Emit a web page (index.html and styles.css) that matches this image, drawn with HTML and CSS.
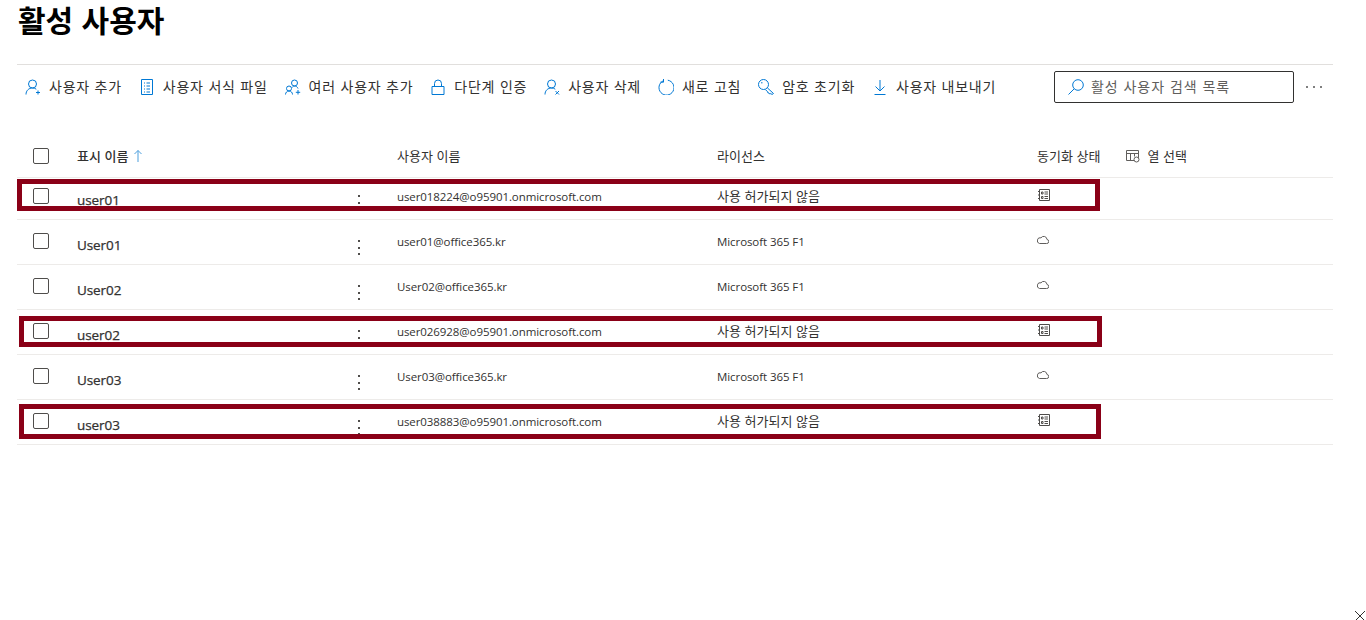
FILE: index.html
```html
<!DOCTYPE html>
<html lang="ko">
<head>
  <meta charset="UTF-8">
  <title>활성 사용자</title>
  <link rel="stylesheet" href="styles.css">
</head>
<body>
  <div class="page">
    <h1 class="title">활성 사용자</h1>

    <!-- 명령 모음 -->
    <div class="toolbar">
      <button class="tool">
        <svg class="ico" viewBox="0 0 16 16"><circle cx="7.500" cy="5" r="4"/><path d="M1 15.500c0-3.800 2.700-6.500 6.500-6.500 1.500 0 2.800.4 3.800 1.200M13 11.500v4M11 13.500h4"/></svg>
        사용자 추가
      </button>
      <button class="tool">
        <svg class="ico" viewBox="0 0 16 16"><path d="M2.500.5h11v15h-11zM5 4h1M7.500 4H11M5 7h1M7.500 7H11M5 10h1M7.500 10H11M5 13h1M7.500 13H11"/></svg>
        사용자 서식 파일
      </button>
      <button class="tool">
        <svg class="ico" viewBox="0 0 16 16"><circle cx="9.500" cy="4" r="3"/><circle cx="4" cy="9.500" r="2.500"/><path d="M.5 15.500c0-2 1.500-3.500 3.500-3.500s3.500 1.500 3.500 3.500M7 8.500c.7-.8 1.500-1.500 2.500-1.500 1.700 0 3 1 3.500 2.500M13 11v4.500M10.800 13.300h4.400"/></svg>
        여러 사용자 추가
      </button>
      <button class="tool">
        <svg class="ico" viewBox="0 0 16 16"><path d="M2 7.500h12v8H2zM4.500 7.500V4.500a3.500 3.500 0 0 1 7 0v3"/></svg>
        다단계 인증
      </button>
      <button class="tool">
        <svg class="ico" viewBox="0 0 16 16"><circle cx="7.500" cy="5" r="4"/><path d="M1 15.500c0-3.800 2.700-6.500 6.500-6.500 1.500 0 2.800.4 3.800 1.200M11.500 12l3.500 3.500M15 12l-3.500 3.500"/></svg>
        사용자 삭제
      </button>
      <button class="tool">
        <svg class="ico" viewBox="0 0 16 16"><path d="M5.500 1.200A7.500 7.500 0 1 0 9.800.7M5.500 -.5v3.200H2.300" transform="translate(0 .5)"/></svg>
        새로 고침
      </button>
      <button class="tool">
        <svg class="ico" viewBox="0 0 16 16"><circle cx="5.500" cy="5.500" r="5"/><path d="M3 3.800h1.500M9.300 8.800l6.200 5.700-1.500 1-1.200-1-1 .6-1-1.200-.8.2-.3-1.400-2.300-2"/></svg>
        암호 초기화
      </button>
      <button class="tool">
        <svg class="ico" viewBox="0 0 16 16"><path d="M8 1v11M3.500 7.500L8 12l4.500-4.500M2.500 15.500h11"/></svg>
        사용자 내보내기
      </button>

      <div class="search">
        <svg class="ico" viewBox="0 0 16 16"><circle cx="10" cy="6" r="5.300"/><path d="M6.200 9.800L.5 15.500"/></svg>
        <span>활성 사용자 검색 목록</span>
      </div>
      <div class="more"><i></i><i></i><i></i></div>
    </div>

    <!-- 사용자 목록 -->
    <div class="list">
      <div class="row head">
        <span class="check"></span>
        <div class="name-col">표시 이름 <svg class="sort" viewBox="0 0 8 12"><path d="M4 .5V12M.5 4L4 .5 7.500 4"/></svg></div>
        <div>사용자 이름</div>
        <div>라이선스</div>
        <div class="sync-col">
          <span>동기화 상태</span>
          <span class="pick">
            <svg class="ico-sm" viewBox="0 0 14 14"><path d="M.5 1.500h12v10H.5zM.5 4.500h12M4.500 4.500v7M8.500 4.500v3"/><circle cx="10.500" cy="10.500" r="2.500" class="gear"/></svg>
            열 선택
          </span>
        </div>
      </div>

      <div class="row first">
        <span class="check"></span>
        <div class="name-col"><strong>user01</strong><span class="dots"><i></i><i></i><i></i></span></div>
        <div>user018224@o95901.onmicrosoft.com</div>
        <div class="ko">사용 허가되지 않음</div>
        <div><svg class="book" viewBox="0 0 12 12"><path d="M1.500.5h10v11h-10zM0 2.500h2M0 6h2M0 9.500h2M3.500 3h1.500v2H3.500zM3.500 7.500h1.500v2H3.500zM6.500 3h3.500M6.500 5h3.500M6.500 7.500h3.500M6.500 9.500h3.500"/></svg></div>
        <div class="mark mark-a"></div>
      </div>

      <div class="row">
        <span class="check"></span>
        <div class="name-col"><strong>User01</strong><span class="dots"><i></i><i></i><i></i></span></div>
        <div>user01@office365.kr</div>
        <div>Microsoft 365 F1</div>
        <div><svg class="cloud" viewBox="0 0 12 9"><path d="M2.500 8.500h7a2 2 0 0 0 .5-4A3.300 3.300 0 0 0 4 2.800 2.900 2.900 0 0 0 2.500 8.500z"/></svg></div>
      </div>

      <div class="row">
        <span class="check"></span>
        <div class="name-col"><strong>User02</strong><span class="dots"><i></i><i></i><i></i></span></div>
        <div>User02@office365.kr</div>
        <div>Microsoft 365 F1</div>
        <div><svg class="cloud" viewBox="0 0 12 9"><path d="M2.500 8.500h7a2 2 0 0 0 .5-4A3.300 3.300 0 0 0 4 2.800 2.900 2.900 0 0 0 2.500 8.500z"/></svg></div>
      </div>

      <div class="row">
        <span class="check"></span>
        <div class="name-col"><strong>user02</strong><span class="dots"><i></i><i></i><i></i></span></div>
        <div>user026928@o95901.onmicrosoft.com</div>
        <div class="ko">사용 허가되지 않음</div>
        <div><svg class="book" viewBox="0 0 12 12"><path d="M1.500.5h10v11h-10zM0 2.500h2M0 6h2M0 9.500h2M3.500 3h1.500v2H3.500zM3.500 7.500h1.500v2H3.500zM6.500 3h3.500M6.500 5h3.500M6.500 7.500h3.500M6.500 9.500h3.500"/></svg></div>
        <div class="mark mark-b"></div>
      </div>

      <div class="row">
        <span class="check"></span>
        <div class="name-col"><strong>User03</strong><span class="dots"><i></i><i></i><i></i></span></div>
        <div>User03@office365.kr</div>
        <div>Microsoft 365 F1</div>
        <div><svg class="cloud" viewBox="0 0 12 9"><path d="M2.500 8.500h7a2 2 0 0 0 .5-4A3.300 3.300 0 0 0 4 2.800 2.900 2.900 0 0 0 2.500 8.500z"/></svg></div>
      </div>

      <div class="row">
        <span class="check"></span>
        <div class="name-col"><strong>user03</strong><span class="dots"><i></i><i></i><i></i></span></div>
        <div>user038883@o95901.onmicrosoft.com</div>
        <div class="ko">사용 허가되지 않음</div>
        <div><svg class="book" viewBox="0 0 12 12"><path d="M1.500.5h10v11h-10zM0 2.500h2M0 6h2M0 9.500h2M3.500 3h1.500v2H3.500zM3.500 7.500h1.500v2H3.500zM6.500 3h3.500M6.500 5h3.500M6.500 7.500h3.500M6.500 9.500h3.500"/></svg></div>
        <div class="mark mark-c"></div>
      </div>
    </div>
  </div>

  <svg class="close" viewBox="0 0 12 12"><path d="M1 1l10 10M11 1L1 11"/></svg>
</body>
</html>
```
FILE: styles.css
```css
html, body {
  height: 100%;
}

body {
  margin: 0;
  background: #fff;
  color: #323130;
  font-family: "Open Sans", "Noto Sans CJK KR", sans-serif;
  font-size: 11.500px;
  letter-spacing: -0.08px;
  overflow: hidden;
}

.page {
  width: 1316px;
  margin-left: 17px;
}

.title {
  height: 40px;
  margin: 0 0 24px 1px;
  color: #000;
  font-family: "Liberation Sans", "Noto Sans CJK KR", sans-serif;
  font-size: 30px;
  font-weight: 700;
  letter-spacing: 0;
  line-height: 43px;
}

/* Toolbar */
.toolbar {
  display: flex;
  align-items: center;
  gap: 17px;
  height: 32px;
  margin-bottom: 32px;
  padding: 6px 11px 0 8px;
  border-top: 1px solid #e1dfdd;
}

.tool {
  display: flex;
  align-items: center;
  gap: 8px;
  height: 32px;
  padding: 0 0 2px;
  border: none;
  background: none;
  color: #323130;
  font-family: "Noto Sans CJK KR", sans-serif;
  font-size: 14px;
  letter-spacing: 0.75px;
  white-space: nowrap;
}

.tool .ico {
  margin-top: 2px;
}

.ico {
  flex: none;
  width: 16px;
  height: 16px;
  fill: none;
  stroke: #0078d4;
  stroke-width: 1;
}

.search {
  display: flex;
  align-items: center;
  gap: 7px;
  box-sizing: border-box;
  flex: none;
  width: 240px;
  height: 32px;
  margin-left: auto;
  margin-right: -5px;
  padding-left: 13px;
  border: 1px solid #323130;
  border-radius: 2px;
  color: #605e5c;
  font-family: "Noto Sans CJK KR", sans-serif;
  font-size: 14px;
  letter-spacing: 0.95px;
  white-space: nowrap;
}

.search span {
  margin-top: -2px;
}

.more {
  display: flex;
  flex: none;
  gap: 5px;
  width: 16px;
}

.more i {
  width: 2px;
  height: 2px;
  border-radius: 50%;
  background: #555;
}

/* List */
.row {
  position: relative;
  display: grid;
  grid-template-columns: 44px 320px 320px 320px 1fr;
  box-sizing: border-box;
  height: 45px;
  padding: 13px 0 0 16px;
  border-bottom: 1px solid #edebe9;
  line-height: 18px;
}

.row.head {
  height: 43px;
  padding-top: 0;
  align-items: center;
  font-family: "Noto Sans CJK KR", sans-serif;
  font-size: 13px;
  letter-spacing: 0;
  line-height: 18px;
}

.row.first {
  height: 42px;
  padding-top: 10px;
}

.check {
  display: block;
  box-sizing: border-box;
  width: 16px;
  height: 16px;
  border: 1px solid #4f4d4b;
  border-radius: 2px;
}

.name-col {
  display: flex;
  justify-content: flex-start;
  position: relative;
}

.name-col strong {
  margin-top: 3px;
  font-size: 13.500px;
  font-weight: 400;
  -webkit-text-stroke: 0.25px #323130;
}

.head .name-col {
  font-weight: 500;
  gap: 6px;
  align-items: center;
}

.sort {
  width: 8px;
  height: 12px;
  fill: none;
  stroke: #4d9fdd;
  stroke-width: 1;
}

.dots {
  position: absolute;
  left: 281px;
  top: 7px;
  display: flex;
  flex-direction: column;
  gap: 4.500px;
}

.dots i {
  width: 2px;
  height: 2px;
  background: #4f4d4b;
}

.ko {
  margin-top: -1px;
  font-family: "Noto Sans CJK KR", sans-serif;
  font-size: 13px;
  letter-spacing: 0;
}

.sync-col {
  display: flex;
  gap: 26px;
  align-items: center;
}

.pick {
  display: flex;
  align-items: center;
  gap: 7px;
}

.ico-sm {
  width: 14px;
  height: 14px;
  fill: none;
  stroke: #605e5c;
  stroke-width: 1;
}

.ico-sm .gear {
  fill: #fff;
  stroke-width: 1;
}

.book {
  display: block;
  width: 12px;
  height: 12px;
  margin: 1px 0 0 1px;
  fill: none;
  stroke: #4f4d4b;
  stroke-width: 1;
}

.cloud {
  display: block;
  width: 12px;
  height: 9px;
  margin-top: 2px;
  fill: none;
  stroke: #605e5c;
  stroke-width: 1;
}

/* 빨간 강조 상자 */
.mark {
  position: absolute;
  box-sizing: border-box;
  border: 5px solid #8a0017;
}

.mark-a {
  top: 1px;
  left: 0;
  width: 1083px;
  height: 32px;
}

.mark-b {
  top: 6px;
  left: 2px;
  width: 1083px;
  height: 31px;
}

.mark-c {
  top: 4px;
  left: 2px;
  width: 1082px;
  height: 35px;
}

.close {
  position: fixed;
  right: 0;
  bottom: -2px;
  width: 12px;
  height: 12px;
  fill: none;
  stroke: #323130;
  stroke-width: 1;
}
```
